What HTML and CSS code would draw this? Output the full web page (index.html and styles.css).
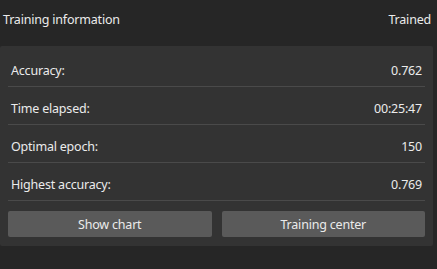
FILE: index.html
```html
<!DOCTYPE html>
<html>
<head>
<meta charset="utf-8">
<link rel="stylesheet" href="styles.css">
</head>
<body>
<div class="page">
  <div class="header">
    <span class="title">Training information</span>
    <span class="status">Trained</span>
  </div>
  <div class="panel">
    <div class="row"><span>Accuracy:</span><span>0.762</span></div>
    <div class="row"><span>Time elapsed:</span><span>00:25:47</span></div>
    <div class="row"><span>Optimal epoch:</span><span>150</span></div>
    <div class="row"><span>Highest accuracy:</span><span>0.769</span></div>
    <div class="buttons">
      <button class="btn">Show chart</button>
      <button class="btn">Training center</button>
    </div>
  </div>
</div>
</body>
</html>
```
FILE: styles.css
```css
html, body {
  margin: 0;
  padding: 0;
  background: #262626;
}
body {
  width: 437px;
  height: 269px;
  font-family: "Noto Sans", "Open Sans", sans-serif;
  font-size: 12.5px;
  letter-spacing: -0.2px;
  color: #ebebeb;
}
.page {
  display: flex;
  flex-direction: column;
}
.header {
  height: 46px;
  display: flex;
  justify-content: space-between;
  align-items: center;
  padding: 0 6px 6px 3px;
  box-sizing: border-box;
  line-height: 20px;
}
.panel {
  width: 433px;
  background: #333333;
  border-radius: 2px;
  padding: 3px 8px 9px 8px;
  box-sizing: border-box;
}
.row {
  display: flex;
  justify-content: space-between;
  height: 38px;
  box-sizing: border-box;
  border-bottom: 1px solid #4a4a4a;
  padding: 12px 3px 0 3px;
  line-height: 20px;
}
.buttons {
  display: flex;
  gap: 10px;
  margin-top: 10px;
}
.btn {
  flex: 1;
  height: 26px;
  background: #5a5a5a;
  border: none;
  border-radius: 2px;
  color: #ebebeb;
  font-family: inherit;
  font-size: 12.5px;
  letter-spacing: -0.2px;
  padding: 0;
}
```
